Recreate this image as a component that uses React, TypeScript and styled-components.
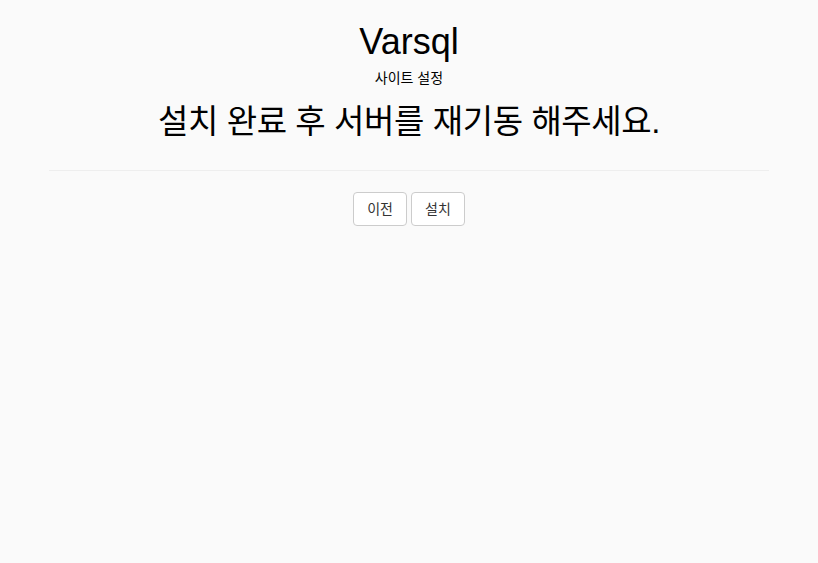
import React from "react";
import styled, { createGlobalStyle } from "styled-components";

const Global = createGlobalStyle`
  html, body { margin: 0; padding: 0; background: #fafafa; }
  body {
    font-family: "Liberation Sans", Arial, "Noto Sans CJK KR", sans-serif;
    color: #000;
    font-size: 14px;
    line-height: 1.42857;
  }
  * { box-sizing: border-box; }
`;

const Page = styled.div`
  width: 720px;
  margin: 0 auto;
  padding-top: 22px;
  display: flex;
  flex-direction: column;
  align-items: center;
`;

const Title = styled.h1`
  margin: 0;
  font-size: 36px;
  font-weight: 400;
  line-height: 1.1;
`;

const Subtitle = styled.div`
  margin-top: 6px;
  font-size: 14px;
  line-height: 20px;
`;

const Heading = styled.h2`
  margin: 14px 0 0;
  font-size: 33px;
  letter-spacing: -0.4px;
  font-weight: 400;
  line-height: 1.2;
`;

const Divider = styled.hr`
  align-self: stretch;
  margin: 29px 0 21px;
  border: 0;
  border-top: 1px solid #eee;
`;

const Buttons = styled.div`
  display: flex;
  gap: 4px;
`;

const Button = styled.button`
  font-family: inherit;
  font-size: 14px;
  line-height: 20px;
  padding: 6px 13px;
  background: #fff;
  color: #333;
  border: 1px solid #ccc;
  border-radius: 4px;
  cursor: pointer;
`;

export default function App() {
  return (
    <>
      <Global />
      <Page>
        <Title>Varsql</Title>
        <Subtitle>사이트 설정</Subtitle>
        <Heading>설치 완료 후 서버를 재기동 해주세요.</Heading>
        <Divider />
        <Buttons>
          <Button>이전</Button>
          <Button>설치</Button>
        </Buttons>
      </Page>
    </>
  );
}
